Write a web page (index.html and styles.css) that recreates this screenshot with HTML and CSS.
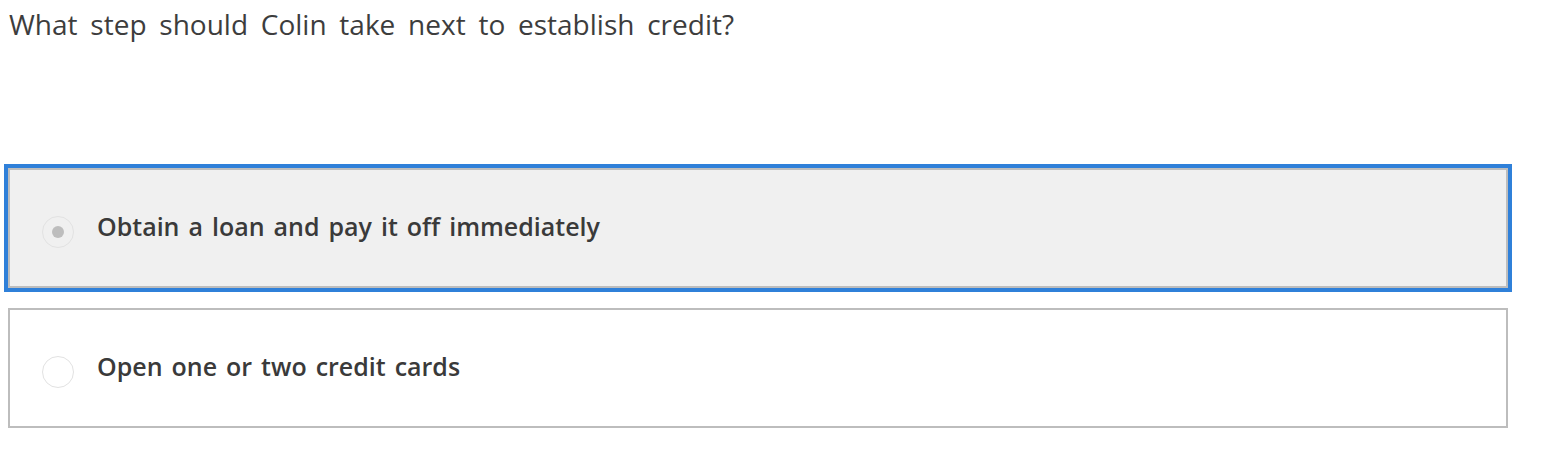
FILE: index.html
```html
<!DOCTYPE html>
<html lang="en">
<head>
<meta charset="utf-8">
<link rel="stylesheet" href="styles.css">
</head>
<body>
<div class="question">What step should Colin take next to establish credit?</div>
<div class="options">
  <label class="option selected">
    <span class="radio"><span class="dot"></span></span>
    <span class="label">Obtain a loan and pay it off immediately</span>
  </label>
  <label class="option">
    <span class="radio"></span>
    <span class="label">Open one or two credit cards</span>
  </label>
</div>
</body>
</html>
```
FILE: styles.css
```css
html, body {
  margin: 0;
  padding: 0;
  background: #ffffff;
}
body {
  font-family: "Open Sans", "Noto Sans", sans-serif;
  color: #3b3b3b;
  width: 1564px;
  height: 470px;
}
.question {
  font-size: 28px;
  line-height: 36px;
  word-spacing: 5.5px;
  padding: 6px 0 0 9px;
  height: 36px;
  color: #3d3d3d;
}
.options {
  margin-top: 126px;
  padding-left: 8px;
  display: flex;
  flex-direction: column;
  gap: 20px;
}
.option {
  box-sizing: border-box;
  width: 1500px;
  height: 120px;
  border: 2px solid #bdbdbd;
  background: #ffffff;
  display: flex;
  align-items: center;
  padding-left: 32px;
}
.option.selected {
  background: #f0f0f0;
  outline: 4px solid #2f80d9;
}
.radio {
  box-sizing: border-box;
  width: 32px;
  height: 32px;
  border-radius: 50%;
  border: 1px solid #e2e2e2;
  margin-top: 8px;
  display: flex;
  align-items: center;
  justify-content: center;
  flex: none;
}
.dot {
  width: 12px;
  height: 12px;
  border-radius: 50%;
  background: #bdbdbd;
}
.label {
  margin-left: 23px;
  margin-bottom: 4px;
  font-size: 25px;
  line-height: 34px;
  font-weight: 600;
  word-spacing: 2.5px;
  color: #3a3a3a;
}
```
